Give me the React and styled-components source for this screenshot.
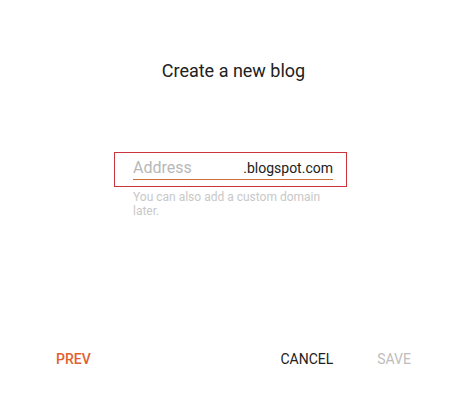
import React from "react";
import styled, { createGlobalStyle } from "styled-components";

const Global = createGlobalStyle`
  html, body { margin: 0; padding: 0; background: #fff; }
  body { font-family: Roboto, "Noto Sans", Arial, sans-serif; }
`;

const Dialog = styled.div`
  width: 467px;
  height: 408px;
  box-sizing: border-box;
  display: flex;
  flex-direction: column;
  background: #fff;
`;

const Title = styled.h1`
  margin: 60px 0 0;
  text-align: center;
  font-size: 18px;
  font-weight: 400;
  color: #212121;
  line-height: 22px;
`;

const Body = styled.div`
  display: flex;
  flex-direction: column;
  margin: 70px 0 0 114px;
  width: 233px;
`;

const FieldBox = styled.div`
  box-sizing: border-box;
  height: 35px;
  border: 1px solid #c9343d;
  padding: 0 13px 0 18px;
  display: flex;
  flex-direction: column;
`;

const FieldRow = styled.div`
  display: flex;
  align-items: baseline;
  justify-content: space-between;
  padding-top: 5px;
  height: 21px;
  border-bottom: 1px solid #c7703a;
`;

const Input = styled.input`
  border: none;
  outline: none;
  padding: 0;
  width: 100px;
  font-family: inherit;
  font-size: 16px;
  color: #212121;
  background: transparent;
  &::placeholder { color: #b8b8b8; }
`;

const Suffix = styled.span`
  font-size: 14px;
  color: #212121;
`;

const Hint = styled.p`
  margin: 3px 0 0 19px;
  width: 200px;
  font-size: 12px;
  line-height: 14px;
  color: #c8c8c8;
`;

const Footer = styled.div`
  margin-top: auto;
  height: 59px;
  display: flex;
  align-items: flex-start;
  padding: 0 46px 0 46px;
`;

const Button = styled.button`
  border: none;
  background: none;
  padding: 0 10px;
  height: 20px;
  font-family: inherit;
  font-size: 14px;
  font-weight: ${(p) => p.$weight || 400};
  text-transform: uppercase;
  color: ${(p) => p.$color};
  cursor: pointer;
  & + & { margin-left: ${(p) => p.$gap || 0}px; }
`;

const Spacer = styled.div`
  flex: 1;
`;

export default function App() {
  return (
    <>
      <Global />
      <Dialog>
        <Title>Create a new blog</Title>
        <Body>
          <FieldBox>
            <FieldRow>
              <Input placeholder="Address" />
              <Suffix>.blogspot.com</Suffix>
            </FieldRow>
          </FieldBox>
          <Hint>You can also add a custom domain later.</Hint>
        </Body>
        <Footer>
          <Button $color="#e0612f" $weight={500}>Prev</Button>
          <Spacer />
          <Button $color="#212121">Cancel</Button>
          <Button $color="#bdbdbd" $gap={24}>Save</Button>
        </Footer>
      </Dialog>
    </>
  );
}
